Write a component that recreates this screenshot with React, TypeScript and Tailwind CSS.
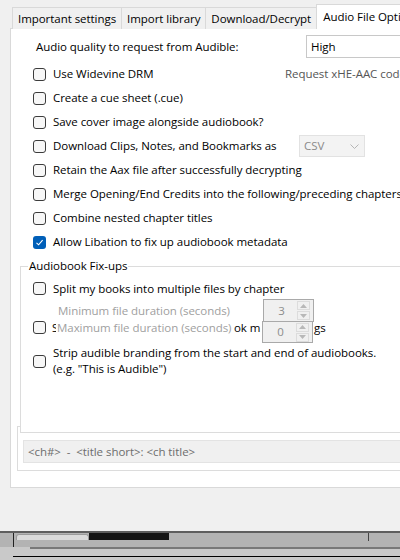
import React from "react";

const Check = ({ checked = false }: { checked?: boolean }) =>
  checked ? (
    <span className="w-[13px] h-[13px] shrink-0 rounded-[3px] bg-[#005fb8] flex items-center justify-center">
      <svg width="9" height="9" viewBox="0 0 9 9" fill="none">
        <path d="M1.5 4.8 L3.6 6.8 L7.6 2.2" stroke="white" strokeWidth="1.1" />
      </svg>
    </span>
  ) : (
    <span className="w-[13px] h-[13px] shrink-0 rounded-[3px] border border-[#3c3c3c] bg-[#f7f7f7]" />
  );

const Row = ({ label, checked, children }: { label: string; checked?: boolean; children?: React.ReactNode }) => (
  <div className="h-[24px] flex items-center pl-[22px]">
    <Check checked={checked} />
    <span className="ml-[7px] whitespace-nowrap">{label}</span>
    {children}
  </div>
);

const Spinner = ({ value, className = "" }: { value: string; className?: string }) => (
  <div className={`w-[51px] shrink-0 flex items-center bg-[#f0f0f0] border border-[#a9a9a9] ${className}`}>
    <span className="flex-1 text-center text-[#8c8c8c] pl-[2px]">{value}</span>
    <div className="w-[13px] mr-[3px] flex flex-col gap-[1px]">
      <div className="h-[9px] flex items-center justify-center border border-[#dcdcdc] bg-[#f0f0f0]">
        <svg width="7" height="4" viewBox="0 0 7 4"><path d="M0 4 L3.5 0 L7 4 Z" fill="#b8b8b8" /></svg>
      </div>
      <div className="h-[9px] flex items-center justify-center border border-[#dcdcdc] bg-[#f0f0f0]">
        <svg width="7" height="4" viewBox="0 0 7 4"><path d="M0 0 L3.5 4 L7 0 Z" fill="#b8b8b8" /></svg>
      </div>
    </div>
  </div>
);

const tabs = ["Important settings", "Import library", "Download/Decrypt"];

export default function App() {
  return (
    <div className="w-[400px] h-[560px] overflow-hidden bg-[#f0f0f0] flex flex-col font-['Open_Sans',sans-serif] text-[11.5px] tracking-[-0.05px] text-black leading-[16px]">
      {/* tab strip */}
      <div className="h-[29px] shrink-0 flex items-end pl-[12px] relative z-10">
        {tabs.map((t) => (
          <div key={t} className="h-[22px] px-[5px] flex items-center border border-b-0 border-r-0 border-[#d9d9d9] bg-[#f0f0f0] whitespace-nowrap">
            {t}
          </div>
        ))}
        <div className="h-[25px] pl-[6px] pr-[6px] flex items-start border border-b-0 border-[#d9d9d9] bg-white whitespace-nowrap">
          <span className="mt-[4px]">Audio File Options</span>
        </div>
      </div>

      {/* tab page */}
      <div className="ml-[10px] -mt-px w-[440px] h-[460px] shrink-0 bg-white border border-[#d9d9d9] flex flex-col">
        <div className="mt-[6px] h-[23px] flex items-center">
          <span className="w-[295px] pl-[25px] whitespace-nowrap">Audio quality to request from Audible:</span>
          <div className="w-[120px] h-[23px] flex items-center pl-[4px] border border-[#c8c8c8] bg-white">High</div>
        </div>

        <div className="mt-[4px]">
          <div className="h-[24px] flex items-center pl-[22px]">
            <Check />
            <span className="ml-[7px] w-[232px] whitespace-nowrap">Use Widevine DRM</span>
            <span className="text-[#555] whitespace-nowrap">Request xHE-AAC codec</span>
          </div>
          <Row label="Create a cue sheet (.cue)" />
          <Row label="Save cover image alongside audiobook?" />
          <div className="h-[24px] flex items-center pl-[22px]">
            <Check />
            <span className="ml-[7px] w-[246px] whitespace-nowrap">Download Clips, Notes, and Bookmarks as</span>
            <div className="w-[66px] h-[22px] flex items-center justify-between pl-[4px] pr-[5px] border border-[#e2e2e2] bg-[#f3f3f3] text-[#8a8a8a]">
              CSV
              <svg width="9" height="5" viewBox="0 0 9 5" fill="none"><path d="M0.5 0.5 L4.5 4.5 L8.5 0.5" stroke="#b5b5b5" /></svg>
            </div>
          </div>
          <Row label="Retain the Aax file after successfully decrypting" />
          <Row label="Merge Opening/End Credits into the following/preceding chapters" />
          <Row label="Combine nested chapter titles" />
          <Row label="Allow Libation to fix up audiobook metadata" checked />
        </div>

        {/* Audiobook Fix-ups */}
        <fieldset className="relative z-10 ml-[9px] mt-[4px] h-[175px] border border-[#dcdcdc] bg-white">
          <legend className="ml-[7px] px-[1px]">Audiobook Fix-ups</legend>
          <div className="mt-[4px] h-[21px] flex items-center pl-[12px]">
            <Check />
            <span className="ml-[7px] whitespace-nowrap">Split my books into multiple files by chapter</span>
          </div>
          <div className="h-[23px] flex items-center">
            <span className="w-[242px] pl-[37px] whitespace-nowrap text-[#a0a0a0]">Minimum file duration (seconds)</span>
            <Spinner value="3" className="h-[23px]" />
          </div>
          <div className="-mt-px h-[22px] flex items-start pl-[12px]">
            <Check />
            <span className="ml-[6px] w-[4px] overflow-hidden leading-[14px]">S</span>
            <span className="w-[178px] pl-[1px] whitespace-nowrap text-[#a0a0a0] bg-white leading-[14px]">Maximum file duration (seconds)</span>
            <span className="w-[28px] whitespace-nowrap overflow-hidden leading-[14px]">ok m</span>
            <Spinner value="0" className="h-[22px]" />
            <span className="ml-[1px] leading-[14px]">gs</span>
          </div>
          <div className="mt-[2px] flex items-center pl-[12px]">
            <Check />
            <span className="ml-[7px] whitespace-nowrap">
              Strip audible branding from the start and end of audiobooks.
              <br />
              (e.g. "This is Audible")
            </span>
          </div>
        </fieldset>

        <div className="ml-[6px] -mt-[7px] pt-[13px] pl-[5px] pb-[7px] border border-[#dcdcdc]">
          <div className="h-[23px] flex items-center pl-[4px] border border-[#e3e3e3] bg-[#f0f0f0] text-[11.5px] text-[#6d6d6d] whitespace-pre">
            {"<ch#>  -  <title short>: <ch title>"}
          </div>
        </div>
      </div>

      <div className="flex-1" />

      {/* window edge below */}
      <div className="h-[29px] shrink-0 flex flex-col bg-[#c9c9c9] border-t-2 border-[#5e5e5e]">
        <div className="h-[14px] flex bg-[#b3b3b3]">
          <div className="ml-[13px] w-px bg-[#222]" />
          <div className="ml-[2px] w-[73px] h-[6px] mt-[1px] rounded-t-[3px] border border-b-0 border-[#9a9a9a] bg-[#dadada]" />
          <div className="w-[80px] h-[7px] bg-[#151515]" />
          <div className="ml-[199px] w-px h-[8px] bg-[#444]" />
        </div>
        <div className="h-[2px] ml-[30px] bg-[#787878]" />
        <div className="h-[7px]" />
        <div className="h-px ml-[13px] bg-black" />
      </div>
    </div>
  );
}
